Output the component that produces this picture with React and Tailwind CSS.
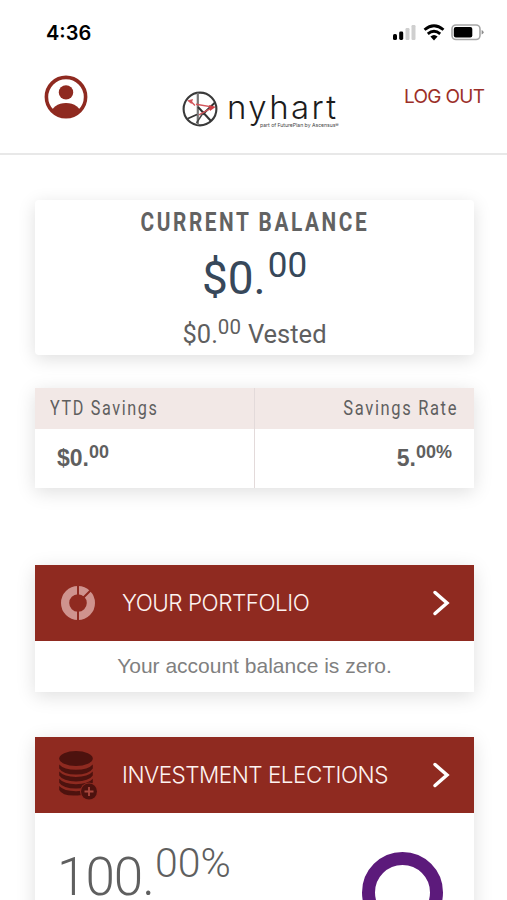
import React from 'react';

const SignalIcon = () => (
    <svg className="w-6 h-[17px]" viewBox="0 0 24 17">
        <rect x="0" y="10" width="4" height="6" rx="1.6" fill="#000" />
        <rect x="6.2" y="7.5" width="4" height="8.5" rx="1.4" fill="#000" />
        <rect x="12.5" y="4" width="4" height="12" rx="1.2" fill="#cfcfcf" />
        <rect x="18.5" y="1" width="4" height="15" rx="1.2" fill="#cfcfcf" />
    </svg>
);

const WifiIcon = () => (
    <svg className="w-[22px] h-[17px]" viewBox="0 0 22 17" fill="none" stroke="#000" strokeWidth="2.8">
        <path d="M1.5 5.8 Q11 -2.2 20.5 5.8" />
        <path d="M4.8 9.9 Q11 4.6 17.2 9.9" />
        <path d="M7.4 12.4 Q11 9.4 14.6 12.4 L11 16.4 Z" fill="#000" stroke="none" />
    </svg>
);

const BatteryIcon = () => (
    <svg className="w-[34px] h-[17px]" viewBox="0 0 34 17">
        <rect x="1" y="1" width="28" height="14.5" rx="4" fill="#fff" stroke="#a6a6a6" strokeWidth="1.6" />
        <rect x="2.8" y="3" width="18.5" height="10.6" rx="2" fill="#000" />
        <path d="M30.6 6 Q34.6 8.2 30.6 10.6 Z" fill="#8c8c8c" />
    </svg>
);

const ProfileIcon = () => (
    <svg className="w-11 h-11" viewBox="0 0 44 44">
        <clipPath id="profile">
            <circle cx="22" cy="22" r="20" />
        </clipPath>
        <circle cx="22" cy="22" r="19.6" fill="#fff" stroke="#8f2a20" strokeWidth="3.6" />
        <circle cx="22" cy="17.4" r="7.2" fill="#8f2a20" />
        <ellipse cx="22" cy="39" rx="15" ry="11" fill="#8f2a20" clipPath="url(#profile)" />
    </svg>
);

const LogoMark = () => (
    <svg className="w-9 h-9 shrink-0" viewBox="0 0 36 36" fill="none">
        <circle cx="18" cy="18" r="16.4" stroke="#3a3a3a" strokeWidth="2.1" />
        <path d="M15.8 1.8 V34" stroke="#777" strokeWidth="2.2" />
        <path d="M32.5 12 L20.5 23.5 M15 23.5 L6 27.5" stroke="#333" strokeWidth="1.9" />
        <path d="M16 16 L29 30" stroke="#333" strokeWidth="2" />
        <path d="M22 20.5 L14.5 32" stroke="#444" strokeWidth="1.4" />
        <path d="M8 9.5 L13 14.5 M14 13.2 L31 16 L17 23.8" stroke="#d2555b" strokeWidth="1.4" />
        <path d="M5 9.5 L11 8 L9.5 13 Z" fill="#d2555b" />
        <path d="M27 14 L33.5 16 L28 20 Z" fill="#cc3f46" />
    </svg>
);

const DonutIcon = () => (
    <svg className="w-[34px] h-[34px] mr-[1px]" viewBox="0 0 34 34" fill="none">
        <circle cx="17" cy="17" r="12.9" stroke="#cf938e" strokeWidth="8.2" />
        <path d="M17 0 V9 M17 25 V34 M22.5 11.5 L30 4" stroke="#8f2a20" strokeWidth="2" />
    </svg>
);

const CoinsIcon = () => (
    <svg className="w-10 h-[50px] mr-[1px]" viewBox="0 0 40 50">
        <g fill="#4d120e">
            <ellipse cx="18" cy="8.5" rx="16.8" ry="7.4" />
            <path d="M1.2 14.4 Q6 19.8 18 19.8 Q30 19.8 34.8 14.4 V18.4 Q31 24.4 18 24.4 Q5 24.4 1.2 18.4 Z" />
            <path d="M1.2 21.6 Q6 27 18 27 Q30 27 34.8 21.6 V25.6 Q31 31.4 18 31.4 Q5 31.4 1.2 25.6 Z" />
            <path d="M1.2 28.8 Q6 34.2 18 34.2 Q30 34.2 34.8 28.8 V32.8 Q31 38.6 18 38.6 Q5 38.6 1.2 32.8 Z" />
            <path d="M1.2 36 Q6 41.2 18 41.2 L24 40.8 V45 Q5 47.4 1.2 40 Z" />
        </g>
        <circle cx="31" cy="41.5" r="9" fill="#8f2a20" />
        <circle cx="31" cy="41.5" r="8" fill="#4d120e" />
        <path d="M31 37 V46 M26.5 41.5 H35.5" stroke="#a9473d" strokeWidth="1.8" />
    </svg>
);

const Chevron = () => (
    <svg className="w-5 h-7" viewBox="0 0 20 28" fill="none">
        <path d="M4 3.5 L16 14 L4 24.5" stroke="#fff" strokeWidth="3.5" strokeLinecap="round" />
    </svg>
);

const SectionHeader = ({ icon, children }) => (
    <div className="flex items-center h-[76px] bg-[#8f2a20] text-[#fdf3f1] pr-[23px]">
        <div className="w-[87px] flex justify-center">{icon}</div>
        <h2 className="flex-1 font-['Inter',sans-serif] font-[360] text-[22.5px] tracking-[-0.5px] whitespace-nowrap">{children}</h2>
        <Chevron />
    </div>
);

const App = () => {
    return (
        <div className="w-[507px] h-[900px] overflow-hidden bg-white font-['Roboto',sans-serif] text-[#5f5f5f]">
            <div className="h-16 pl-[46px] pr-[22px] flex items-center justify-between">
                <span className="font-['Inter',sans-serif] font-semibold text-[20px] text-black pt-0.5">4:36</span>
                <div className="flex items-center">
                    <SignalIcon />
                    <div className="ml-[6px] mr-[6px]">
                        <WifiIcon />
                    </div>
                    <BatteryIcon />
                </div>
            </div>

            <header className="h-[91px] border-b-2 border-[#e8e8e8] flex items-start pl-11">
                <div className="pt-[11px]">
                    <ProfileIcon />
                </div>
                <div className="flex ml-[94px] pt-[27px] w-[160px]">
                    <LogoMark />
                    <div className="ml-[9px] whitespace-nowrap font-['Inter',sans-serif] text-[#1c1c1c]">
                        <div className="text-[33px] leading-[32px] font-[350] tracking-[2.4px]">nyhart</div>
                        <div className="text-[5.1px] leading-[6px] text-[#444] ml-[33px] -mt-[1px]">part of FuturePlan by Ascensus®</div>
                    </div>
                </div>
                <button className="ml-[62px] pt-[19px] font-['Inter',sans-serif] text-[19px] leading-[28px] tracking-[-0.7px] text-[#9c2f28] whitespace-nowrap">LOG OUT</button>
            </header>

            <main className="pl-[35px] pr-[33px] pt-[45px]">
                <section className="h-[155px] rounded-[4px] bg-white shadow-[0_4px_18px_rgba(0,0,0,0.13)] flex flex-col items-center whitespace-nowrap">
                    <h1 className="text-[26px] leading-[44px] font-bold tracking-[3.2px] scale-x-[0.8] text-[#626262]">CURRENT BALANCE</h1>
                    <div className="flex items-start text-[#37485a] h-[68px]">
                        <span className="text-[46px] leading-[68px]">$0.</span>
                        <span className="text-[35px] leading-[44px] pl-[2px]">00</span>
                    </div>
                    <div className="flex items-start text-[25.5px] leading-[44px]">
                        <span>$0.</span>
                        <span className="text-[20.5px] leading-[30px]">00</span>
                        <span className="pl-[7px]">Vested</span>
                    </div>
                </section>

                <section className="mt-[33px] h-[100px] grid grid-cols-2 bg-white shadow-[0_4px_18px_rgba(0,0,0,0.13)] whitespace-nowrap">
                    <div className="border-r border-[#e3dada]">
                        <div className="h-[41px] bg-[#f2e8e6] pl-[15px] text-[20px] leading-[41px] tracking-[2px]">
                            <span className="inline-block origin-left scale-x-[0.81]">YTD Savings</span>
                        </div>
                        <div className="flex items-start pl-[22px] font-['Liberation_Sans',sans-serif] font-bold text-[23px] leading-[58px]">
                            <span>$0.</span>
                            <span className="text-[18px] leading-[46px]">00</span>
                        </div>
                    </div>
                    <div>
                        <div className="h-[41px] bg-[#f2e8e6] pr-[16px] text-right text-[20px] leading-[41px] tracking-[2px]">
                            <span className="inline-block origin-right scale-x-[0.825]">Savings Rate</span>
                        </div>
                        <div className="flex items-start justify-end pr-[22px] font-['Liberation_Sans',sans-serif] font-bold text-[23px] leading-[58px]">
                            <span>5.</span>
                            <span className="text-[18px] leading-[46px]">00%</span>
                        </div>
                    </div>
                </section>

                <section className="mt-[77px] bg-white shadow-[0_4px_18px_rgba(0,0,0,0.13)]">
                    <SectionHeader icon={<DonutIcon />}>YOUR PORTFOLIO</SectionHeader>
                    <p className="h-[51px] text-center font-['Liberation_Sans',sans-serif] text-[21px] leading-[50px] text-[#808080]">Your account balance is zero.</p>
                </section>

                <section className="mt-[45px] h-[240px] bg-white shadow-[0_4px_18px_rgba(0,0,0,0.13)]">
                    <SectionHeader icon={<CoinsIcon />}>INVESTMENT ELECTIONS</SectionHeader>
                    <div className="flex justify-between pl-[22px] pr-[31px]">
                        <div className="flex items-start pt-[42px] font-light whitespace-nowrap">
                            <span className="text-[53px] leading-[44px] tracking-[-1px]">100.</span>
                            <span className="-mt-[11px] pl-[1px] text-[41px] leading-[38px]">00%</span>
                        </div>
                        <div className="mt-[39px] w-[81px] h-[81px] rounded-full border-[13px] border-[#5c1a7b]"></div>
                    </div>
                </section>
            </main>
        </div>
    );
};

export default App;
